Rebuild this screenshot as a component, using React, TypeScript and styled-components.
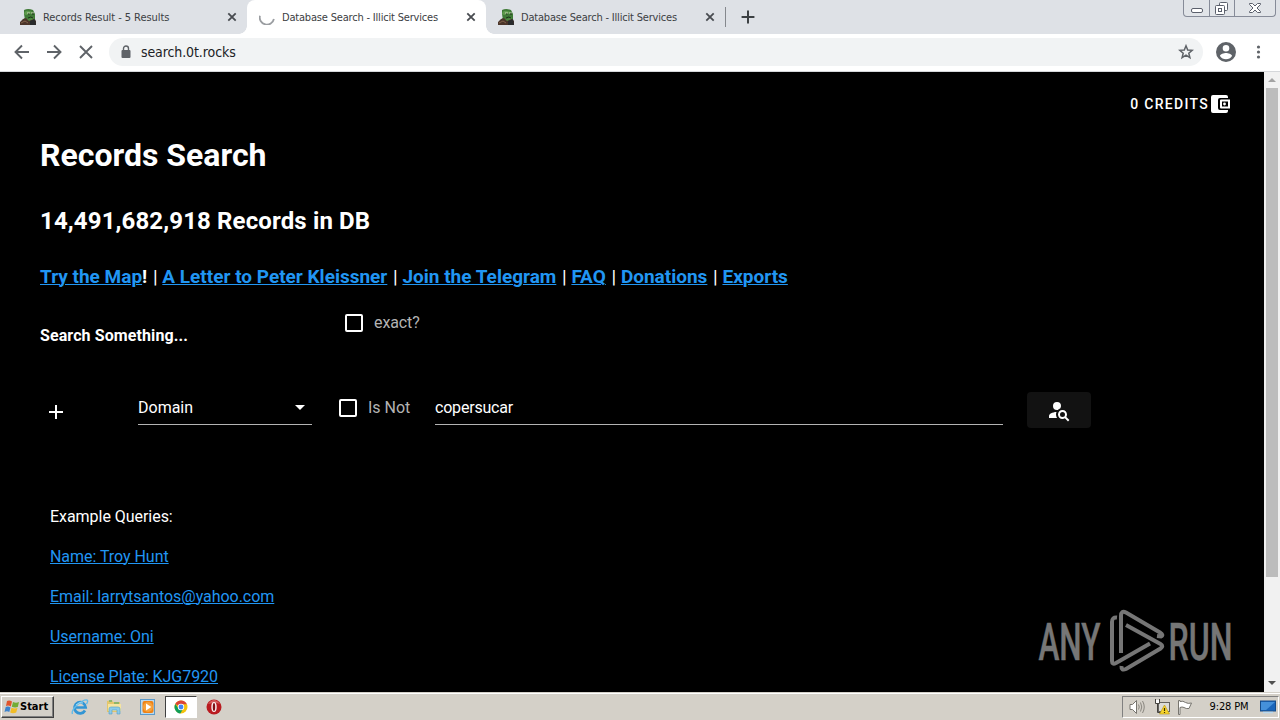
import React from "react";
import styled, { createGlobalStyle } from "styled-components";

const GlobalStyle = createGlobalStyle`
  * {
    box-sizing: border-box;
  }
  body {
    margin: 0;
    background: #000;
    overflow: hidden;
  }
  svg {
    display: block;
    flex: none;
  }
`;

const uiFont = `"DejaVu Sans Condensed", "DejaVu Sans", sans-serif`;

const Screen = styled.div`
  width: 1280px;
  height: 720px;
  display: flex;
  flex-direction: column;
  overflow: hidden;
  position: relative;
`;

const TabStrip = styled.div`
  flex: none;
  height: 34px;
  display: flex;
  background: #dee1e6;
  padding-left: 8px;
`;

const Tab = styled.div<{ $active?: boolean }>`
  width: 239px;
  height: 34px;
  display: flex;
  align-items: center;
  padding: 0 10px 0 12px;
  background: ${({ $active }) => ($active ? "#fff" : "transparent")};
  border-radius: 8px 8px 0 0;
  position: relative;

  &::before,
  &::after {
    content: "";
    display: ${({ $active }) => ($active ? "block" : "none")};
    position: absolute;
    bottom: 0;
    width: 8px;
    height: 8px;
  }
  &::before {
    left: -8px;
    background: radial-gradient(circle at 0 0, transparent 7.5px, #fff 8px);
  }
  &::after {
    right: -8px;
    background: radial-gradient(circle at 100% 0, transparent 7.5px, #fff 8px);
  }
`;

const TabTitle = styled.span<{ $wide?: boolean }>`
  flex: 1;
  margin: 1px 0 0 7px;
  font: 11px/16px ${uiFont};
  letter-spacing: ${({ $wide }) => ($wide ? "-0.06px" : "-0.19px")};
  color: #3c4043;
  white-space: nowrap;
`;

const NewTab = styled.div`
  display: flex;
  align-items: center;
  gap: 15px;
`;

const TabDivider = styled.div`
  width: 1px;
  height: 20px;
  background: #85888d;
`;

const Toolbar = styled.div`
  flex: none;
  height: 38px;
  display: flex;
  align-items: center;
  padding: 0 13px 1px;
  background: #fff;
  border-bottom: 1px solid #d5d7da;
`;

const NavButtons = styled.div`
  display: flex;
  gap: 14px;
  width: 96px;
`;

const Omnibox = styled.div`
  width: 1094px;
  height: 28px;
  display: flex;
  align-items: center;
  padding: 0 9px 0 11px;
  border-radius: 14px;
  background: #f1f3f4;
`;

const Url = styled.span`
  flex: 1;
  margin-left: 9px;
  font: 14px/20px ${uiFont};
  letter-spacing: -0.1px;
  color: #202124;
`;

const ToolbarEnd = styled.div`
  display: flex;
  align-items: center;
  gap: 13px;
  margin-left: 13px;
`;

const WindowControls = styled.div`
  position: absolute;
  top: 0;
  left: 1183px;
  width: 93px;
  height: 17px;
  display: grid;
  grid-template-columns: 25px 25px 1fr;
  border: 1px solid #868b98;
  border-top: 0;
  border-radius: 0 0 4px 4px;
  background: #e1e4e8;
`;

const WindowControl = styled.div`
  display: flex;
  justify-content: center;
  & + & {
    border-left: 1px solid #868b98;
  }
`;

const Viewport = styled.div`
  height: 620px;
  flex: none;
  display: flex;
`;

const Page = styled.main`
  width: 1264px;
  height: 620px;
  overflow: hidden;
  padding: 0 34px 0 40px;
  background: #000;
  color: #fff;
  font-family: Roboto, sans-serif;
  position: relative;
`;

const Credits = styled.div`
  height: 64px;
  display: flex;
  align-items: center;
  justify-content: flex-end;
  font-size: 14px;
  font-weight: 500;
  letter-spacing: 1.3px;
  gap: 1px;
`;

const Title = styled.h1`
  margin: 0;
  font-size: 32px;
  line-height: 38px;
  font-weight: 700;
`;

const RecordCount = styled.h2`
  margin: 33px 0 0;
  font-size: 24px;
  line-height: 28px;
  font-weight: 700;
  letter-spacing: 0.13px;
`;

const LinkLine = styled.h3`
  margin: 31px 0 0;
  font-size: 19px;
  line-height: 22px;
  font-weight: 700;
  white-space: nowrap;
`;

const Separator = styled.span`
  margin-left: 1px;
  font-weight: 400;
`;

const Link = styled.a`
  color: #2196f3;
  text-decoration: underline;
  text-decoration-thickness: 1px;
`;

const SearchHeader = styled.div`
  height: 76px;
  display: grid;
  grid-template-columns: 305px 1fr;
`;

const SearchLabel = styled.div`
  padding-top: 38px;
  font-size: 16px;
  line-height: 20px;
  font-weight: 700;
  letter-spacing: 0.1px;
`;

const CheckField = styled.label`
  display: flex;
  align-items: center;
  height: 20px;
  gap: 11px;
  font-size: 16px;
  color: #b3b3b3;
  white-space: nowrap;
`;

const ExactField = styled(CheckField)`
  margin-top: 25px;
  line-height: 20px;
  letter-spacing: -0.1px;
`;

const Box = styled.span`
  width: 18px;
  height: 18px;
  border: 2px solid #fff;
  border-radius: 2px;
`;

const QueryRow = styled.div`
  height: 60px;
  display: flex;
  margin-top: 11px;
`;

const AddCell = styled.div`
  width: 98px;
  padding: 25px 0 0 4px;
`;

const Select = styled.div`
  width: 174px;
  height: 41px;
  display: flex;
  align-items: center;
  justify-content: space-between;
  padding: 7px 6px 0 0;
  font-size: 16px;
  border-bottom: 1px solid #b3b3b3;
  margin-top: 9px;
`;

const NotField = styled(CheckField)`
  width: 96px;
  margin: 23px 0 0 27px;
  line-height: 18px;
`;

const TextField = styled.div`
  width: 568px;
  height: 41px;
  margin-top: 9px;
  padding-top: 7px;
  display: flex;
  align-items: center;
  font-size: 16px;
  letter-spacing: -0.2px;
  border-bottom: 1px solid #b3b3b3;
`;

const SearchButton = styled.button`
  width: 64px;
  height: 36px;
  margin: 17px 0 0 24px;
  padding: 0;
  display: flex;
  align-items: center;
  justify-content: center;
  border: 0;
  border-radius: 4px;
  background: #121212;
`;

const Examples = styled.div`
  display: flex;
  flex-direction: column;
  align-items: flex-start;
  gap: 20px;
  margin: 72px 0 0 10px;
  font-size: 16px;
  line-height: 20px;
  letter-spacing: -0.04px;
`;

const Scrollbar = styled.div`
  width: 16px;
  height: 620px;
  display: flex;
  flex-direction: column;
  align-items: center;
  background: #f1f1f1;
`;

const ScrollArrow = styled.div`
  height: 16px;
  display: flex;
  align-items: center;
`;

const ScrollThumb = styled.div`
  width: 12px;
  height: 489px;
  margin-bottom: 98px;
  background: #bcbcbc;
`;

const Watermark = styled.div`
  position: absolute;
  left: 1036px;
  top: 606px;
`;

const Taskbar = styled.div`
  flex: none;
  height: 28px;
  display: flex;
  align-items: center;
  padding: 1px 1px 0;
  background: #d4d0c8;
  border-top: 1px solid #d4d0c8;
  box-shadow: inset 0 1px 0 #fff;
`;

const StartButton = styled.div`
  width: 53px;
  height: 22px;
  display: flex;
  align-items: center;
  padding-left: 2px;
  border: 1px solid;
  border-color: #fff #404040 #404040 #fff;
  box-shadow: inset -1px -1px 0 #808080;
  font: bold 11px/16px ${uiFont};
  color: #000;
`;

const QuickLaunch = styled.div`
  display: flex;
  align-items: center;
  margin-left: 9px;
`;

const LaunchItem = styled.div<{ $pressed?: boolean }>`
  width: ${({ $pressed }) => ($pressed ? "32px" : "34px")};
  height: 22px;
  display: flex;
  align-items: center;
  justify-content: center;
  ${({ $pressed }) =>
    $pressed &&
    `
    background: #fff;
    border: 1px solid;
    border-color: #404040 #fff #fff #404040;
  `}
`;

const Tray = styled.div`
  width: 157px;
  height: 22px;
  margin-left: auto;
  display: flex;
  align-items: center;
  padding: 0 2px 0 5px;
  border: 1px solid;
  border-color: #808080 #fff #fff #808080;
`;

const TrayIcons = styled.div`
  display: flex;
  gap: 8px;
`;

const Clock = styled.span`
  flex: 1;
  text-align: center;
  padding-left: 3px;
  font: 11px/16px ${uiFont};
  letter-spacing: -0.15px;
  color: #000;
  white-space: nowrap;
`;

const FrogIcon = () => (
  <svg width="16" height="16" viewBox="0 0 16 16">
    <path d="M4 1Q8-1 13 1L15 5L15 10L11 13L5 11L4 5Z" fill="#3f7a36" />
    <path d="M4 5Q5 1 9 2L13 3L10 5L6 6Z" fill="#5e9a4c" />
    <path d="M4 9Q8 11 14 8L13 11Q9 14 5 12Z" fill="#4f8a40" />
    <path d="M0 16V13L3 10L6 9L9 12L14 10L16 12V16Z" fill="#4b352a" />
    <path d="M10 12L15 10L16 16H10Z" fill="#292b2c" />
    <path d="M7 4H10M11 4H14" stroke="#c3d3b0" />
    <path d="M8 5H9.5M12 5H14M8 9Q11 7 13 9" fill="none" stroke="#1d3219" />
    <path d="M1 14L5 12L8 14" fill="none" stroke="#82634b" />
  </svg>
);

const CloseIcon = () => (
  <svg width="10" height="10" viewBox="0 0 10 10">
    <path d="M1.3 1.3L8.7 8.7M8.7 1.3L1.3 8.7" stroke="#484b50" strokeWidth="1.8" />
  </svg>
);

const Spinner = () => (
  <svg width="16" height="16" viewBox="0 0 16 16">
    <path d="M.9 6.8A7.1 7.1 0 1 0 14.9 10" fill="none" stroke="#9a9da1" strokeWidth="1.8" />
  </svg>
);

const NavIcon = ({ d }: { d: string }) => (
  <svg width="18" height="18" viewBox="0 0 18 18">
    <path d={d} fill="none" stroke="#5f6368" strokeWidth="1.9" />
  </svg>
);

const LockIcon = () => (
  <svg width="12" height="14" viewBox="0 0 12 14">
    <rect x="1.5" y="5" width="9" height="8" rx="1" fill="#5f6368" />
    <path d="M3.5 6V3.5a2.5 2.5 0 0 1 5 0V6" fill="none" stroke="#5f6368" strokeWidth="1.4" />
  </svg>
);

const StarIcon = () => (
  <svg width="16" height="16" viewBox="0 0 16 16">
    <path
      d="M8 1.8L9.7 6L14.2 6.3L10.8 9.2L11.9 13.6L8 11.2L4.1 13.6L5.2 9.2L1.8 6.3L6.3 6Z"
      fill="none"
      stroke="#5f6368"
      strokeWidth="1.5"
    />
  </svg>
);

const AccountIcon = () => (
  <svg width="20" height="20" viewBox="2 2 20 20">
    <path
      fill="#5f6368"
      d="M12 2a10 10 0 1 0 0 20 10 10 0 0 0 0-20zm0 3a3.3 3.3 0 1 1 0 6.6A3.3 3.3 0 0 1 12 5zm0 14.2a7.2 7.2 0 0 1-6-3.22c.03-1.99 4-3.08 6-3.08 1.99 0 5.97 1.09 6 3.08a7.2 7.2 0 0 1-6 3.22z"
    />
  </svg>
);

const MenuIcon = () => (
  <svg width="18" height="16" viewBox="0 0 18 16" fill="#5f6368">
    <circle cx="9.5" cy="3" r="1.6" />
    <circle cx="9.5" cy="8" r="1.6" />
    <circle cx="9.5" cy="13" r="1.6" />
  </svg>
);

const WalletIcon = () => (
  <svg width="20" height="20" viewBox="0 0 20 20">
    <path
      fill="#fff"
      d="M18 16v1a2 2 0 0 1-2 2H3a2 2 0 0 1-2-2V3a2 2 0 0 1 2-2h13a2 2 0 0 1 2 2v1h-8a2 2 0 0 0-2 2v8a2 2 0 0 0 2 2zM11 5.500h9v9h-9a1 1 0 0 1-1-1v-7a1 1 0 0 1 1-1zm1 2v5h6v-5z"
    />
    <circle cx="14.500" cy="10" r="1.400" fill="#fff" />
  </svg>
);

const PlusIcon = ({ color, size, weight }: { color: string; size: number; weight: number }) => (
  <svg width={size} height={size} viewBox="0 0 24 24">
    <path d="M12 1V23M1 12H23" stroke={color} strokeWidth={weight} />
  </svg>
);

const AccountSearchIcon = () => (
  <svg width="24" height="24" viewBox="0 0 24 24">
    <path
      fill="#fff"
      d="M15.5 12C18 12 20 14 20 16.5C20 17.38 19.75 18.21 19.31 18.9L22.39 22L21 23.39L17.88 20.32C17.19 20.75 16.37 21 15.5 21C13 21 11 19 11 16.5C11 14 13 12 15.5 12M15.5 14A2.5 2.5 0 0 0 13 16.5A2.5 2.5 0 0 0 15.5 19A2.5 2.5 0 0 0 18 16.5A2.5 2.5 0 0 0 15.5 14M10 4A4 4 0 0 1 14 8C14 8.91 13.69 9.75 13.18 10.43C12.32 10.75 11.55 11.26 10.91 11.9L10 12A4 4 0 0 1 6 8A4 4 0 0 1 10 4M2 20V18C2 15.88 5.31 14.14 9.5 14C9.18 14.78 9 15.62 9 16.5C9 17.79 9.38 19 10 20H2Z"
    />
  </svg>
);

const WindowsLogo = () => (
  <svg width="16" height="16" viewBox="0 0 16 16">
    <path d="M3 2Q5.500 1 8 2.500L6.800 7.500Q4.500 6 2 7Z" fill="#e2542b" />
    <path d="M9 3Q12 4.500 15 3L13.800 8Q11 9 7.800 7.800Z" fill="#72ac35" />
    <path d="M1.700 8Q4.300 7 6.500 8.500L5.300 13Q3 11.700.500 13Z" fill="#3d83cd" />
    <path d="M7.500 8.800Q10.500 10 13.500 9L12.200 13.500Q9 15 6.200 13.500Z" fill="#f2bd27" />
  </svg>
);

const ExplorerLogo = () => (
  <svg width="18" height="18" viewBox="0 0 18 18">
    <path
      d="M14 12.500A5.600 5.600 0 1 1 14.700 9.500H5"
      fill="none"
      stroke="#3295d4"
      strokeWidth="2.700"
    />
    <path d="M1.500 16Q0 13 5.500 7.500Q13 1 16 2Q17.500 3 15.500 6" fill="none" stroke="#63bbe9" strokeWidth="1.400" />
    <path d="M5 7Q8 3.500 12 5" fill="none" stroke="#9eddf8" />
  </svg>
);

const FolderLogo = () => (
  <svg width="18" height="18" viewBox="0 0 18 18">
    <path d="M2 3L7 2L8 4L15 4V14H2Z" fill="#e4c66b" />
    <path d="M3 6H16V13H3Z" fill="#f5e4a0" />
    <path d="M4 3H7M9 5H14" stroke="#71b06b" strokeWidth="1.500" />
    <path d="M4 16V11Q4 9 6 9H13Q15 9 15 11V16H12V12H7V16Z" fill="#8ccbe9" stroke="#529fc7" strokeWidth=".6" />
  </svg>
);

const PlayerLogo = () => (
  <svg width="18" height="18" viewBox="0 0 18 18">
    <rect x="1.500" y="1.500" width="14" height="15" fill="#b9d9ef" stroke="#5b9aca" />
    <rect x="3.500" y="3" width="11" height="12" rx="2" fill="#ef8215" />
    <circle cx="9" cy="9" r="5" fill="#f6a13b" />
    <path d="M7 5.500L12.300 9L7 12.500Z" fill="#fff" />
  </svg>
);

const ChromeLogo = () => (
  <svg width="14" height="14" viewBox="0 0 14 14">
    <circle cx="7" cy="7" r="6.500" fill="#f4c20d" />
    <path d="M7 7L1.200 4A6.500 6.500 0 0 1 12.900 4.200H7Z" fill="#db4437" />
    <path d="M1.300 3.900A6.500 6.500 0 0 0 6.300 13.500L9.300 8.500L4.500 8.500Z" fill="#0f9d58" />
    <circle cx="7" cy="7" r="3.200" fill="#fff" />
    <circle cx="7" cy="7" r="2.400" fill="#4285f4" />
  </svg>
);

const OperaLogo = () => (
  <svg width="16" height="16" viewBox="0 0 16 16">
    <circle cx="8" cy="8" r="7.500" fill="#b91b20" />
    <path d="M2 5Q8-3 14 5Q10 3 2 5Z" fill="#d45b5b" />
    <ellipse cx="8" cy="8" rx="2.700" ry="5" fill="#f8eeee" />
    <ellipse cx="8" cy="8" rx="1.200" ry="4" fill="#811015" />
  </svg>
);

const SpeakerIcon = () => (
  <svg width="18" height="16" viewBox="0 0 18 16" fill="none">
    <path d="M2 5.500H4.500L8.500 1.500V14.500L4.500 10.500H2Z" fill="#fff" stroke="#77756f" />
    <path d="M10.500 5.500Q12 8 10.500 10.500M12.500 3.500Q15 8 12.500 12.500M14.500 2Q18 8 14.500 14" stroke="#89867f" />
  </svg>
);

const NetworkIcon = () => (
  <svg width="16" height="16" viewBox="0 0 16 16">
    <rect x="4.500" y="3.500" width="11" height="9" fill="#dcdcd8" stroke="#65635f" />
    <path d="M1.500 0V4.500H5.500V0M3.500 5V13.500H9M3.500 1V3" fill="none" stroke="#45433f" />
    <path d="M2 1H5V4H2Z" fill="#fff" />
    <path d="M10.500 6L15.500 15H5.500Z" fill="#f7d42c" stroke="#b79313" strokeWidth=".6" />
    <path d="M10.500 9V12M10.500 13V14" stroke="#3c3000" strokeWidth="1.200" />
  </svg>
);

const FlagIcon = () => (
  <svg width="17" height="16" viewBox="2 0 17 16">
    <path d="M2.500 15.500V1.500H4V2.500Q7 1.500 9.500 3.500Q12 5 15.500 4L13 9.500Q10 10 8 8.500Q6 7.500 4 8.500V15.500Z" fill="#fff" stroke="#77756f" />
  </svg>
);

const DesktopIcon = () => (
  <svg width="16" height="14" viewBox="0 0 16 14">
    <rect x=".5" y="1" width="15" height="10" fill="#1b66ba" stroke="#164c89" />
    <path d="M1 2H15L6 10H1Z" fill="#4591da" />
    <path d="M3 12.500H13" stroke="#b9d8ef" strokeWidth="1.500" />
  </svg>
);

const AnyRunLogo = () => (
  <svg width="210" height="70" viewBox="0 0 210 70">
    <g
      fill="#767676"
      stroke="#767676"
      strokeWidth=".5"
      fontFamily="Roboto, sans-serif"
      fontSize="52.5"
      fontWeight="500"
    >
      <text x="2.5" y="53.5" textLength="62" lengthAdjust="spacingAndGlyphs">ANY</text>
      <text x="132.5" y="53.5" textLength="64" lengthAdjust="spacingAndGlyphs">RUN</text>
    </g>
    <g fill="none" stroke="#767676" strokeWidth="4">
      <path d="M85 47V10Q85 4 90 6.500L124 26.500Q128 29 125 30.500L121 30" />
      <path d="M90 19L124.500 38Q128 40 124.500 42.500L90 63Q85 65 85.500 60" />
      <path d="M81 11.500Q76 11 76 16V55Q76 59 80 57L114 37.500" />
    </g>
  </svg>
);

const links = [
  "A Letter to Peter Kleissner",
  "Join the Telegram",
  "FAQ",
  "Donations",
  "Exports",
];

const examples = [
  "Name: Troy Hunt",
  "Email: larrytsantos@yahoo.com",
  "Username: Oni",
  "License Plate: KJG7920",
];

export default function App() {
  return (
    <Screen>
      <GlobalStyle />
      <TabStrip>
        <Tab>
          <FrogIcon />
          <TabTitle $wide>Records Result - 5 Results</TabTitle>
          <CloseIcon />
        </Tab>
        <Tab $active>
          <Spinner />
          <TabTitle>Database Search - Illicit Services</TabTitle>
          <CloseIcon />
        </Tab>
        <Tab>
          <FrogIcon />
          <TabTitle>Database Search - Illicit Services</TabTitle>
          <CloseIcon />
        </Tab>
        <NewTab>
          <TabDivider />
          <PlusIcon color="#3c4043" size={14} weight={3.4} />
        </NewTab>
      </TabStrip>
      <Toolbar>
        <NavButtons>
          <NavIcon d="M16 9H3M9 2.500L2.500 9L9 15.500" />
          <NavIcon d="M2 9H15M9 2.500L15.500 9L9 15.500" />
          <NavIcon d="M3 3L15 15M15 3L3 15" />
        </NavButtons>
        <Omnibox>
          <LockIcon />
          <Url>search.0t.rocks</Url>
          <StarIcon />
        </Omnibox>
        <ToolbarEnd>
          <AccountIcon />
          <MenuIcon />
        </ToolbarEnd>
      </Toolbar>
      <WindowControls>
        <WindowControl>
          <svg width="24" height="16" viewBox="0 0 24 16">
            <rect x="6.500" y="8.500" width="11" height="4" rx="1.500" fill="#fff" stroke="#5b606c" />
          </svg>
        </WindowControl>
        <WindowControl>
          <svg width="24" height="16" viewBox="0 0 24 16" fill="#fff" stroke="#5b606c">
            <rect x="9.500" y="2.500" width="8" height="8" rx="1" />
            <rect x="5.500" y="5.500" width="9" height="9" rx="1" />
            <rect x="8.500" y="8.500" width="3" height="3" />
          </svg>
        </WindowControl>
        <WindowControl>
          <svg width="24" height="16" viewBox="0 0 24 16">
            <path
              d="M6.500 3.500H9.500L12 6L14.500 3.500H17.500V4.500L14 8L17.500 11.500V12.500H14.500L12 10L9.500 12.500H6.500V11.500L10 8L6.500 4.500Z"
              fill="#fff"
              stroke="#5b606c"
            />
          </svg>
        </WindowControl>
      </WindowControls>
      <Viewport>
        <Page>
          <Credits>
            0 CREDITS
            <WalletIcon />
          </Credits>
          <Title>Records Search</Title>
          <RecordCount>14,491,682,918 Records in DB</RecordCount>
          <LinkLine>
            <Link>Try the Map</Link>!
            {links.map((link) => (
              <React.Fragment key={link}>
                <Separator> | </Separator>
                <Link>{link}</Link>
              </React.Fragment>
            ))}
          </LinkLine>
          <SearchHeader>
            <SearchLabel>Search Something...</SearchLabel>
            <ExactField>
              <Box />
              exact?
            </ExactField>
          </SearchHeader>
          <QueryRow>
            <AddCell>
              <svg width="24" height="24" viewBox="0 0 24 24">
                <path d="M12 5V19M5 12H19" stroke="#fff" strokeWidth="2" />
              </svg>
            </AddCell>
            <Select>
              Domain
              <svg width="12" height="6" viewBox="0 0 12 6">
                <path d="M1 0H11L6 5Z" fill="#fff" />
              </svg>
            </Select>
            <NotField>
              <Box />
              Is Not
            </NotField>
            <TextField>copersucar</TextField>
            <SearchButton>
              <AccountSearchIcon />
            </SearchButton>
          </QueryRow>
          <Examples>
            <span>Example Queries:</span>
            {examples.map((example) => (
              <Link key={example}>{example}</Link>
            ))}
          </Examples>
        </Page>
        <Scrollbar>
          <ScrollArrow>
            <svg width="8" height="4" viewBox="0 0 8 4">
              <path d="M0 4H8L4 0Z" fill="#a3a3a3" />
            </svg>
          </ScrollArrow>
          <ScrollThumb />
          <ScrollArrow>
            <svg width="8" height="4" viewBox="0 0 8 4">
              <path d="M0 0H8L4 4Z" fill="#505050" />
            </svg>
          </ScrollArrow>
        </Scrollbar>
      </Viewport>
      <Taskbar>
        <StartButton>
          <WindowsLogo />
          Start
        </StartButton>
        <QuickLaunch>
          <LaunchItem>
            <ExplorerLogo />
          </LaunchItem>
          <LaunchItem>
            <FolderLogo />
          </LaunchItem>
          <LaunchItem>
            <PlayerLogo />
          </LaunchItem>
          <LaunchItem $pressed>
            <ChromeLogo />
          </LaunchItem>
          <LaunchItem>
            <OperaLogo />
          </LaunchItem>
        </QuickLaunch>
        <Tray>
          <TrayIcons>
            <SpeakerIcon />
            <NetworkIcon />
            <FlagIcon />
          </TrayIcons>
          <Clock>9:28 PM</Clock>
          <DesktopIcon />
        </Tray>
      </Taskbar>
      <Watermark>
        <AnyRunLogo />
      </Watermark>
    </Screen>
  );
}
